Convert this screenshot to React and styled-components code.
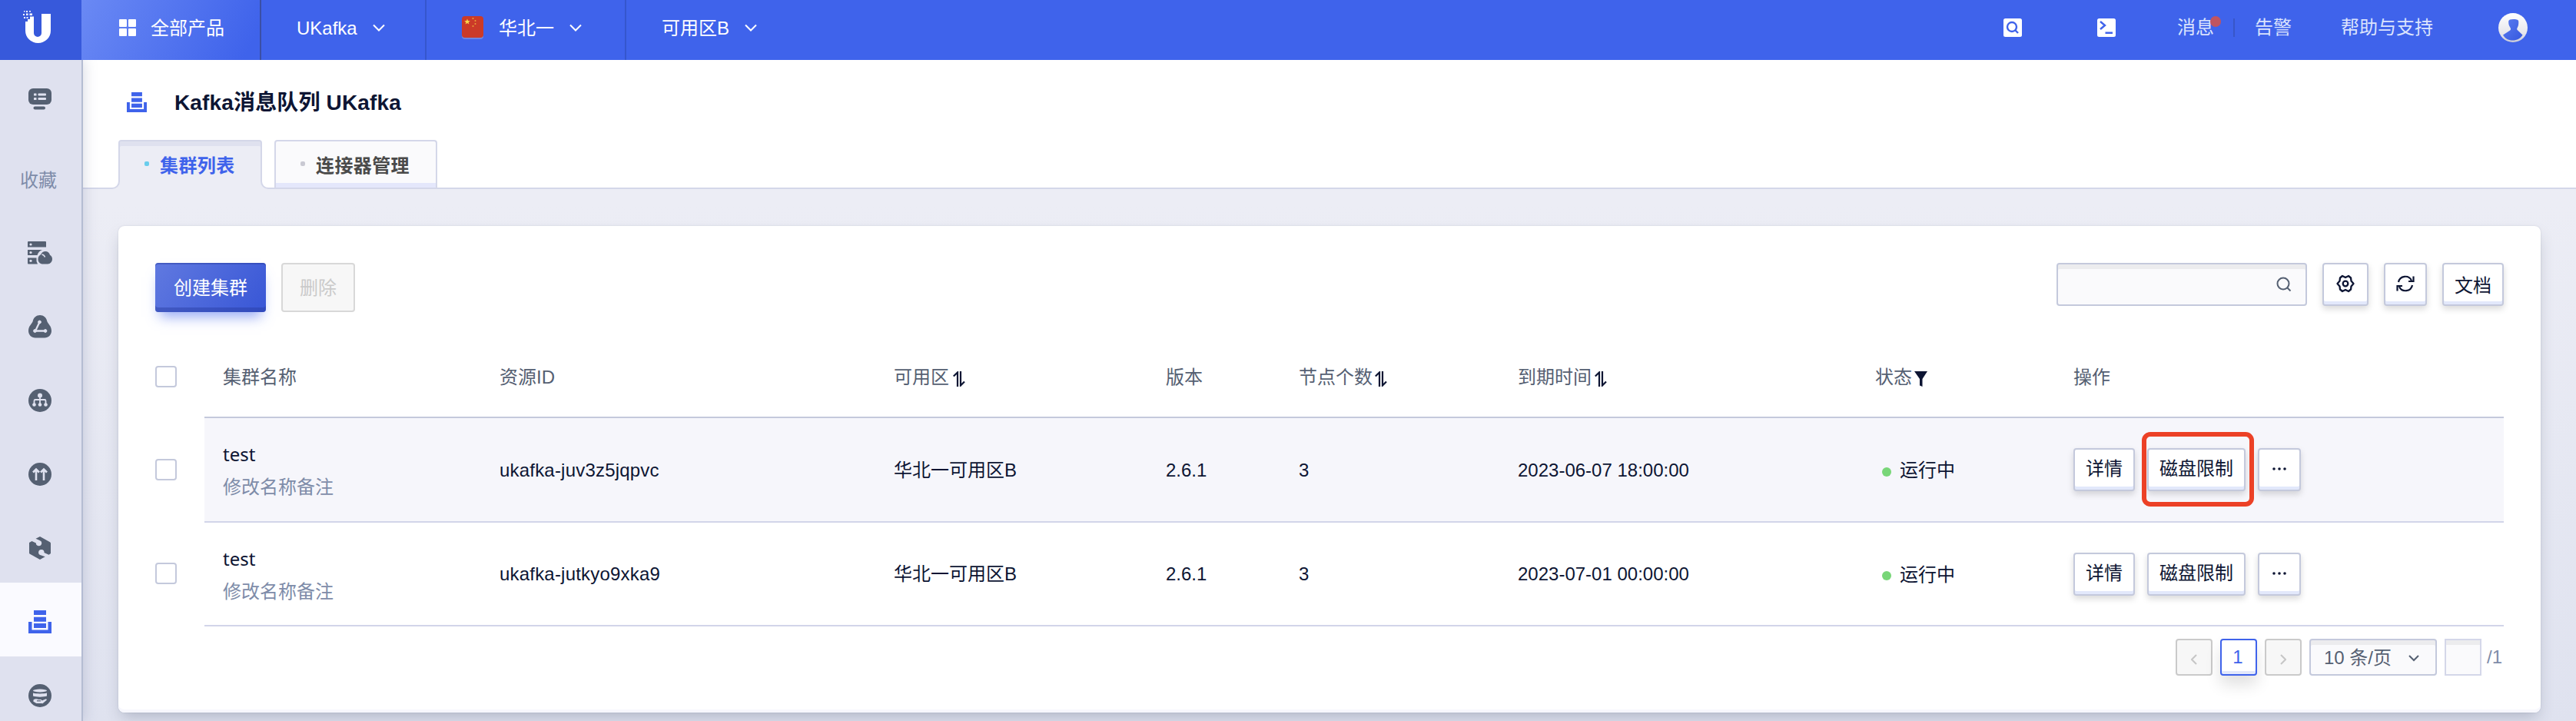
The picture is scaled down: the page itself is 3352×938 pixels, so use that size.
import React from 'react';
import styled, { createGlobalStyle, css } from 'styled-components';

const sans = '"Liberation Sans", "Noto Sans CJK SC", sans-serif';

const GlobalStyle = createGlobalStyle`
  *, *::before, *::after { box-sizing: border-box; }
  body { margin: 0; font-family: ${sans}; font-size: 24px; color: #0d1533; overflow: hidden; }
  button, input { font: inherit; color: inherit; }
  svg { display: block; flex: none; }
`;

const Page = styled.div`
  height: 938px;
  display: flex;
  flex-direction: column;
  overflow: hidden;
`;

/* ---------- top navigation ---------- */
const TopBar = styled.header`
  position: relative;
  z-index: 3;
  flex: none;
  height: 78px;
  display: flex;
  background: #3f63eb;
  color: #fff;
  line-height: 36px;
`;
const LogoBox = styled.div`
  width: 106px;
  padding: 14px 0 0 30px;
  background: #3759db;
`;
const NavItem = styled.div`
  width: ${(p) => p.$width}px;
  padding: 0 0 6px ${(p) => p.$pad}px;
  display: flex;
  align-items: center;
  border-right: ${(p) => (p.$last ? 'none' : '2px solid ' + (p.$primary ? '#3a4fa5' : '#3556cd'))};
  ${(p) => p.$primary && css`background: linear-gradient(117deg, #6a89f4 0%, #3f63eb 92%);`}
  > * + * { margin-left: ${(p) => p.$gap || 20}px; }
`;
const NavLabel = styled.span`padding-top: 2px;`;
const Spacer = styled.div`flex: 1;`;
const TopTools = styled.div`
  display: flex;
  align-items: center;
  padding: 0 63px 6px 0;
  color: #dbe3fd;
`;
const ToolSlot = styled.div`
  position: relative;
  margin-left: ${(p) => p.$ml}px;
`;
const AlertDot = styled.i`
  position: absolute;
  top: 3px;
  right: -9px;
  width: 14px;
  height: 14px;
  border-radius: 50%;
  background: #c1545f;
`;
const ToolDivider = styled.i`
  width: 2px;
  height: 24px;
  margin-left: 25px;
  background: #3856c8;
`;

/* ---------- body ---------- */
const Body = styled.div`
  flex: 1;
  min-height: 0;
  display: flex;
`;
const Sidebar = styled.nav`
  position: relative;
  z-index: 2;
  flex: none;
  width: 108px;
  background: #dfe1ef;
  border-right: 2px solid #b4bcd2;
  box-shadow: 2px 0 16px rgba(90, 100, 140, 0.22);
`;
const SideItem = styled.div`
  height: ${(p) => p.$height || 96}px;
  padding: ${(p) => (p.$top === undefined ? 6 : p.$top)}px 2px ${(p) => p.$bottom || 0}px 0;
  display: flex;
  align-items: center;
  justify-content: center;
  color: ${(p) => (p.$active ? '#3f63eb' : '#556072')};
  background: ${(p) => (p.$active ? '#fafaff' : 'transparent')};
`;
const SideLabel = styled.span`
  padding: 0 4px 1px 0;
  color: #7e8ca9;
`;
const Main = styled.main`
  flex: 1;
  min-width: 0;
  display: flex;
  flex-direction: column;
  background: linear-gradient(180deg, #ecedf5 0%, #ecedf5 22%, #dfe2ef 100%);
`;
const PageHead = styled.div`
  flex: none;
  height: 168px;
  padding: 0 0 0 46px;
  display: flex;
  flex-direction: column;
  background: #fff;
  border-bottom: 2px solid #d4d7e9;
`;
const TitleRow = styled.div`
  flex: none;
  height: 104px;
  padding: 7px 0 0 11px;
  display: flex;
  align-items: center;
  gap: 36px;
`;
const TitleIcon = styled.span`
  padding-bottom: 2px;
  color: #3f63eb;
`;
const Title = styled.h1`
  margin: 0;
  font-size: 28px;
  line-height: 40px;
  font-weight: 700;
  letter-spacing: 0.15px;
`;
const TabRow = styled.div`
  flex: none;
  margin-bottom: -2px;
  display: flex;
  gap: 16px;
`;
const Tab = styled.div`
  position: relative;
  height: ${(p) => (p.$active ? 64 : 62)}px;
  width: ${(p) => p.$width}px;
  padding: 0 0 ${(p) => (p.$active ? 4 : 2)}px 32px;
  display: flex;
  align-items: center;
  gap: 14px;
  font-weight: 700;
  letter-spacing: 0.4px;
  border: 2px solid #d4d7e9;
  border-bottom: none;
  border-radius: 4px 4px 0 0;
  color: ${(p) => (p.$active ? '#3f63eb' : '#4a4a4a')};
  background: ${(p) => (p.$active ? '#ecedf5' : '#fafafc')};
  box-shadow: ${(p) => (p.$active ? 'inset 0 6px 0 #dfe1ef' : 'inset 0 -6px 0 #e4e7fb')};
`;
/* concave foot where the active tab meets the baseline */
const TabFoot = styled.i`
  position: absolute;
  bottom: 0;
  ${(p) => (p.$side === 'left' ? 'left: -10px;' : 'right: -10px;')}
  width: 10px;
  height: 10px;
  overflow: hidden;
  background: #ecedf5;
  &::after {
    content: '';
    position: absolute;
    bottom: 0;
    ${(p) => (p.$side === 'left' ? 'right: 0;' : 'left: 0;')}
    width: 20px;
    height: 20px;
    border: 2px solid #d4d7e9;
    border-radius: 10px;
    background: #fff;
  }
`;
const TabDot = styled.i`
  width: 6px;
  height: 6px;
  border-radius: 2px;
  background: ${(p) => (p.$active ? '#69cdec' : '#c9c9d3')};
`;

/* ---------- card ---------- */
const Card = styled.section`
  flex: none;
  height: 633px;
  margin: 48px 46px 0;
  padding: 48px;
  background: #fff;
  border-radius: 8px;
  box-shadow: inset 0 -4px 0 #f7f7fd, 0 0 2px rgba(60, 70, 100, 0.18), 0 10px 20px -4px rgba(50, 60, 90, 0.26);
`;
const Toolbar = styled.div`
  height: 64px;
  display: flex;
  align-items: flex-start;
  gap: 20px;
`;
const PrimaryButton = styled.button`
  width: 144px;
  height: 64px;
  padding: 0 0 4px;
  border: none;
  border-radius: 4px;
  color: #fff;
  background: linear-gradient(125deg, #6079e0, #3856d6);
  box-shadow: inset 0 2px 0 rgba(40, 60, 160, 0.45), inset 0 -6px 0 rgba(40, 60, 160, 0.45),
    0 12px 16px -6px rgba(63, 99, 235, 0.55);
`;
const DisabledButton = styled.button`
  width: 96px;
  height: 64px;
  padding: 0 0 4px;
  border: 2px solid #d8d8d8;
  border-radius: 4px;
  color: #cacaca;
  background: #f7f7f7;
`;
const Button = styled.button`
  flex: none;
  width: ${(p) => p.$width}px;
  height: 56px;
  padding: 0 0 2px;
  display: flex;
  align-items: center;
  justify-content: center;
  white-space: nowrap;
  border: 2px solid #c4c9dc;
  border-radius: 4px;
  background: #fff;
  box-shadow: inset 0 -4px 0 #e2e8fb, 0 4px 8px rgba(0, 0, 0, 0.15);
`;
const SearchBox = styled.div`
  width: 326px;
  height: 56px;
  padding: 0 18px;
  display: flex;
  align-items: center;
  justify-content: flex-end;
  border: 2px solid #c4c9dc;
  border-radius: 4px;
  background: #fafafc;
  box-shadow: inset 0 6px 0 #ececee;
`;

/* ---------- table ---------- */
const Table = styled.div`margin-top: 32px;`;
const Row = styled.div`
  height: ${(p) => p.$height}px;
  display: flex;
`;
const CheckCell = styled.div`
  width: 64px;
  padding-bottom: 3px;
  display: flex;
  align-items: center;
`;
const Checkbox = styled.span`
  width: 28px;
  height: 28px;
  border: 2px solid #c4c9dc;
  border-radius: 4px;
  background: #fff;
`;
const Cells = styled.div`
  flex: 1;
  display: grid;
  grid-template-columns: 360px 513px 354px 173px 285px 465px 258px 1fr;
  align-items: center;
  border-bottom: 2px solid ${(p) => (p.$head ? '#c4c9dc' : '#d2d5e9')};
  background: ${(p) => (p.$shade ? '#f6f6fb' : 'transparent')};
  color: ${(p) => (p.$head ? '#556072' : '#0d1533')};
`;
const Cell = styled.div`
  padding: 1px 0 0 24px;
  display: flex;
  align-items: center;
  line-height: 36px;
  white-space: nowrap;
`;
const IdCell = styled(Cell)`letter-spacing: 0.2px;`;
const NameCell = styled(Cell)`
  flex-direction: column;
  align-items: flex-start;
  padding-top: 3px;
  gap: 1px;
  line-height: 42px;
`;
const Name = styled.span`font-family: "Noto Sans", sans-serif;`;
const SubName = styled.span`color: #7e8ca9;`;
const HeadIcon = styled.span`
  margin-left: ${(p) => p.$gap}px;
  padding-top: 5px;
  color: #0d1533;
`;
const Status = styled.span`
  display: flex;
  align-items: center;
  padding: 1px 0 0 9px;
  gap: 11px;
  &::before {
    content: '';
    width: 12px;
    height: 12px;
    margin-top: 3px;
    border-radius: 50%;
    background: #78d678;
  }
`;
const Actions = styled(Cell)`
  padding-top: 0;
  gap: 16px;
`;
const Highlight = styled.div`
  position: relative;
  &::after {
    content: '';
    position: absolute;
    top: -21px;
    bottom: -20px;
    left: -7px;
    right: -11px;
    border: 6px solid #ec4126;
    border-radius: 11px;
  }
`;

/* ---------- pagination ---------- */
const Pager = styled.div`
  margin-top: 16px;
  display: flex;
  justify-content: flex-end;
  gap: 10px;
  line-height: 44px;
`;
const PageButton = styled.button`
  width: 48px;
  height: 48px;
  padding: 5px 0 0;
  display: flex;
  align-items: center;
  justify-content: center;
  border: 2px solid #cacaca;
  border-radius: 4px;
  color: #c6c6c6;
  background: #f7f7f7;
  ${(p) => p.$current && css`
    padding: 0 2px 0 0;
    border-color: #3f63eb;
    color: #3f63eb;
    background: #fff;
    box-shadow: inset 0 -4px 0 #e2e8fb, 0 12px 20px rgba(0, 0, 0, 0.12);
  `}
`;
const PageSize = styled.div`
  width: 166px;
  height: 48px;
  padding: 2px 21px 0 17px;
  display: flex;
  align-items: center;
  justify-content: space-between;
  border: 2px solid #c4c9dc;
  border-radius: 4px;
  color: #556072;
  background: #fafafc;
  box-shadow: inset 0 6px 0 #ececee;
`;
const PageInput = styled.div`
  width: 48px;
  height: 48px;
  border: 2px solid #d4d7e9;
  background: #fafafc;
  box-shadow: inset 0 6px 0 #ececee;
`;
const PageTotal = styled.span`
  margin-left: -3px;
  padding-right: 2px;
  line-height: 48px;
  color: #7e8ca9;
`;

/* ---------- drawings ---------- */
const Logo = () => (
  <svg width="38" height="42" viewBox="0 0 38 42" fill="#fff">
    <path d="M3 14h3v-3h3V7.500h5V29a5 5 0 0 0 10 0V4h12v22a16.500 16 0 0 1-33 0z" />
    <path d="M1 0h1.500v1.500H1zM4 0h2v2H4zM8 0h2v1.500H8zM0 4h2v2H0zM4 3.500h2.500V6H4zM8.500 3.500h3.500V6H8.500zM1 8h2v2H1zM4.500 8h2v2h-2z" />
  </svg>
);
const GridIcon = () => (
  <svg width="22" height="22" viewBox="0 0 22 22" fill="#fff">
    <rect width="10" height="10" rx="1" /><rect x="12" width="10" height="10" rx="1" />
    <rect y="12" width="10" height="10" rx="1" /><rect x="12" y="12" width="10" height="10" rx="1" />
  </svg>
);
const Chevron = ({ w = 16, h = 10, d = 'M1 1.500l7 7 7-7' }) => (
  <svg width={w} height={h} viewBox={`0 0 ${w} ${h}`} fill="none" stroke="currentColor" strokeWidth="2"><path d={d} /></svg>
);
const Flag = () => (
  <svg width="28" height="30" viewBox="0 0 28 30">
    <rect y="2" width="28" height="28" rx="4" fill="#6f86e0" />
    <rect width="28" height="28" rx="4" fill="#cb3a28" />
    <path fill="#f7d74a" d="M7 3.500l1 2.600 2.800.1-2.200 1.700.8 2.700L7 9.100l-2.400 1.500.8-2.700-2.200-1.700 2.800-.1z" />
    <g fill="#e8a33a"><circle cx="14.500" cy="3" r="1" /><circle cx="17.500" cy="6" r="1" /><circle cx="17.500" cy="10" r="1" /><circle cx="14.500" cy="13" r="1" /></g>
  </svg>
);
const SearchTile = () => (
  <svg width="24" height="24" viewBox="0 0 24 24" fill="none" stroke="#3f63eb" strokeWidth="2.400">
    <rect width="24" height="24" rx="2.500" fill="#fff" stroke="none" />
    <circle cx="11" cy="11" r="6" /><path d="M15 15l4 4" />
  </svg>
);
const TerminalTile = () => (
  <svg width="24" height="24" viewBox="0 0 24 24" fill="none" stroke="#3f63eb" strokeWidth="2.400">
    <rect width="24" height="24" rx="2.500" fill="#fff" stroke="none" />
    <path d="M4 4l6 5-6 5M10.500 18.800h9.500" />
  </svg>
);
const Avatar = () => (
  <svg width="38" height="38" viewBox="0 0 38 38">
    <defs>
      <linearGradient id="ring" x1="0" y1="0" x2="0" y2="1"><stop offset="0" stopColor="#fff" /><stop offset=".7" stopColor="#e6e6ec" /><stop offset="1" stopColor="#c9cad6" /></linearGradient>
      <linearGradient id="bust" x1="0" y1="0" x2="1" y2="1"><stop offset="0" stopColor="#5b7cf0" /><stop offset="1" stopColor="#3558df" /></linearGradient>
    </defs>
    <circle cx="19" cy="19" r="19" fill="url(#ring)" />
    <path fill="url(#bust)" d="M13.200 10.500c.3-1.700 2.500-2.500 6-2.500s6.700.5 7 2.500c.3 3.500-.2 6.500-1.700 9-.7 1-.3 2.500 1 3.200L31.500 28.500C29 33 24 35.500 18.500 35.500S8.500 33 6 28.500l8.500-5.500c1.700-1 2-2.300 1-4-1.700-2.500-2.500-5-2.300-8.500z" />
  </svg>
);
const QueueIcon = ({ size = 30 }) => (
  <svg width={size} height={size} viewBox="0 0 30 30" fill="currentColor">
    <path d="M7 0h16v6H7zM7 8.700h16v6H7zM7 17h16v6H7zM0 15h4.500v10.500h21V15H30v15H0z" />
  </svg>
);
const ConsoleIcon = () => (
  <svg width="30" height="28" viewBox="0 0 30 28" fill="currentColor">
    <path d="M6 0h18a6 6 0 0 1 6 6v9a6 6 0 0 1-6 6H6a6 6 0 0 1-6-6V6a6 6 0 0 1 6-6z" />
    <rect x="6.500" y="23.500" width="15.500" height="4" rx="2" />
    <g fill="#dfe1ef"><rect x="7" y="6.500" width="3.500" height="3" rx=".5" /><rect x="12.500" y="6.500" width="10.500" height="3" rx="1" /><rect x="7" y="12" width="3.500" height="3" rx=".5" /><rect x="12.500" y="12" width="10.500" height="3" rx="1" /></g>
  </svg>
);
const ServerCloudIcon = () => (
  <svg width="32" height="30" viewBox="0 0 32 30" fill="currentColor">
    <path d="M1 0h22a1 1 0 0 1 1 1v6.500H0V1a1 1 0 0 1 1-1zM0 11h19c-3 1-5.500 3.500-6.500 7H0zM0 21.500h11.500V26l1.500 3.500H1a1 1 0 0 1-1-1z" />
    <path d="M20 29.500c-4 0-6.500-2.800-6.500-6.300 0-3 1.500-5 3.500-5.900 1.200-2.800 3.700-4.300 6-4.300 3 0 5.300 2 6 4.800 2 1.200 3 3.200 3 5.200 0 3.500-2.500 6.500-6 6.500z" />
    <path d="M18.500 17c2 .5 3.500 1.700 4 3.500" stroke="#dfe1ef" strokeWidth="1.600" fill="none" />
    <g fill="#dfe1ef"><circle cx="4" cy="4" r="1.600" /><circle cx="4" cy="14.500" r="1.600" /><circle cx="4" cy="25.300" r="1.600" /></g>
  </svg>
);
const NodesIcon = () => (
  <svg width="30" height="30" viewBox="0 0 30 30" fill="currentColor">
    <path d="M15 0c4.500 0 8.500 3 9.300 8C25.500 11.500 30 14 30 20.500c0 5-4 9-9 9H9c-5 0-9-4-9-9C0 14 4.500 11.500 5.700 8 6.500 3 10.500 0 15 0z" />
    <g fill="#dfe1ef" stroke="#dfe1ef"><path d="M14.500 9L9 20.500h13" fill="none" strokeWidth="2.300" /><circle cx="14.500" cy="9" r="1.900" /><circle cx="8.500" cy="20.500" r="1.900" /><circle cx="22" cy="20.500" r="1.900" /></g>
  </svg>
);
const TreeIcon = () => (
  <svg width="30" height="30" viewBox="0 0 30 30" fill="currentColor">
    <circle cx="15" cy="15" r="15" />
    <g fill="#dfe1ef"><circle cx="15" cy="8.500" r="3" /><circle cx="7.500" cy="20.500" r="2.300" /><circle cx="15" cy="20.500" r="2.300" /><circle cx="22.500" cy="20.500" r="2.300" /></g>
    <path d="M15 9v11M7.500 20v-4.500a1.500 1.500 0 0 1 1.500-1.500h12a1.500 1.500 0 0 1 1.500 1.500V20" fill="none" stroke="#dfe1ef" strokeWidth="1.800" />
  </svg>
);
const ArrowsIcon = () => (
  <svg width="30" height="30" viewBox="0 0 30 30" fill="currentColor">
    <circle cx="15" cy="15" r="15" />
    <path d="M10 23V9.500M6 12.500l4-4 4 4M20 23V9.500M16 12.500l4-4 4 4" fill="none" stroke="#dfe1ef" strokeWidth="2.600" />
  </svg>
);
const HexIcon = () => (
  <svg width="28" height="30" viewBox="0 0 28 30" fill="currentColor">
    <path d="M8.500 2.800L14 0l13 7.200a2 2 0 0 1 1 1.800v13l-2.500 1.700-6-2.700a3.700 3.700 0 1 0-3.800 3.400l5 1.800L14 30 1 22.800A2 2 0 0 1 0 21V8l3.500-2 5.300 2.500A3.700 3.700 0 1 0 13.500 5z" />
  </svg>
);
const DiskHandIcon = () => (
  <svg width="30" height="30" viewBox="0 0 30 30" fill="currentColor">
    <circle cx="15" cy="15" r="15" />
    <ellipse cx="15" cy="8.500" rx="9" ry="1.900" fill="#dfe1ef" />
    <path d="M6 11.500c4 1.200 14 1.200 18 0V15.500c-4 1.500-14 1.500-18 0zM6.500 20.500c2-1.700 4.500-1.700 6.500-.5h3.500l1 1.500 5.500-2.300 1 1.300-5.500 4.800c-3-.8-5.500 0-8-.3-1.500-.3-2.500-2-4-2z" fill="#dfe1ef" />
    <path d="M11 21.800h5" stroke="currentColor" strokeWidth="1.200" />
  </svg>
);
const SearchIcon = () => (
  <svg width="20" height="20" viewBox="0 0 20 20" fill="none" stroke="#556072" strokeWidth="2"><circle cx="9" cy="9" r="7.500" /><path d="M14.500 14.500l4 4" /></svg>
);
const GearIcon = () => (
  <svg width="24" height="24" viewBox="0 0 24 24" fill="none" stroke="currentColor" strokeWidth="2.300" strokeLinejoin="round">
    <path d="M8 2l4 2 4-2 3 2.500.5 4L22.500 12l-3 3.500-.5 4L16 22l-4-2-4 2-3-2.500-.5-4L1.500 12l3-3.500.5-4z" />
    <circle cx="12" cy="12" r="3.300" />
  </svg>
);
const RefreshIcon = () => (
  <svg width="24" height="22" viewBox="0 0 24 22" fill="none" stroke="currentColor" strokeWidth="2.200">
    <path d="M3 9a9 9 0 0 1 17-2M22.500 1.500V8H16M21 13a9 9 0 0 1-17 2M1.500 20.500V14H8" />
  </svg>
);
const SortIcon = () => (
  <svg width="16" height="20" viewBox="0 0 16 20" fill="none" stroke="currentColor" strokeWidth="2.200"><path d="M.8 6.500L6 1.500V20M10 0v18.500l5-5" /></svg>
);
const FilterIcon = () => (
  <svg width="17" height="20" viewBox="0 0 17 20" fill="currentColor"><path d="M0 0h17l-6.500 10v10L7 18.500V10z" /></svg>
);
const MoreIcon = () => (
  <svg width="18" height="4" viewBox="0 0 18 4" fill="currentColor"><circle cx="2" cy="2" r="1.800" /><circle cx="9" cy="2" r="1.800" /><circle cx="16" cy="2" r="1.800" /></svg>
);

const sideIcons = [ServerCloudIcon, NodesIcon, TreeIcon, ArrowsIcon, HexIcon];

const columns = [
  { label: '集群名称' },
  { label: '资源ID' },
  { label: '可用区', icon: SortIcon, gap: 5 },
  { label: '版本' },
  { label: '节点个数', icon: SortIcon, gap: 3 },
  { label: '到期时间', icon: SortIcon, gap: 4 },
  { label: '状态', icon: FilterIcon, gap: 3 },
  { label: '操作' },
];

const clusters = [
  { id: 'ukafka-juv3z5jqpvc', expires: '2023-06-07 18:00:00', marked: true, height: 136 },
  { id: 'ukafka-jutkyo9xka9', expires: '2023-07-01 00:00:00', marked: false, height: 135 },
];

function ClusterRow({ cluster }) {
  const limit = <Button $width={128}>磁盘限制</Button>;
  return (
    <Row $height={cluster.height}>
      <CheckCell><Checkbox /></CheckCell>
      <Cells $shade={cluster.marked}>
        <NameCell><Name>test</Name><SubName>修改名称备注</SubName></NameCell>
        <IdCell>{cluster.id}</IdCell>
        <Cell>华北一可用区B</Cell>
        <Cell>2.6.1</Cell>
        <Cell>3</Cell>
        <Cell>{cluster.expires}</Cell>
        <Cell><Status>运行中</Status></Cell>
        <Actions>
          <Button $width={80}>详情</Button>
          {cluster.marked ? <Highlight>{limit}</Highlight> : limit}
          <Button $width={56}><MoreIcon /></Button>
        </Actions>
      </Cells>
    </Row>
  );
}

export default function App() {
  return (
    <Page>
      <GlobalStyle />
      <TopBar>
        <LogoBox><Logo /></LogoBox>
        <NavItem $width={234} $pad={49} $gap={19} $primary><GridIcon /><NavLabel>全部产品</NavLabel></NavItem>
        <NavItem $width={215} $pad={46}><NavLabel>UKafka</NavLabel><Chevron /></NavItem>
        <NavItem $width={260} $pad={46}><Flag /><NavLabel>华北一</NavLabel><Chevron /></NavItem>
        <NavItem $width={220} $pad={46} $last><NavLabel>可用区B</NavLabel><Chevron /></NavItem>
        <Spacer />
        <TopTools>
          <ToolSlot $ml={0}><SearchTile /></ToolSlot>
          <ToolSlot $ml={98}><TerminalTile /></ToolSlot>
          <ToolSlot $ml={80}><NavLabel>消息</NavLabel><AlertDot /></ToolSlot>
          <ToolDivider />
          <ToolSlot $ml={26}>告警</ToolSlot>
          <ToolSlot $ml={64}>帮助与支持</ToolSlot>
          <ToolSlot $ml={85}><Avatar /></ToolSlot>
        </TopTools>
      </TopBar>
      <Body>
        <Sidebar>
          <SideItem $height={104} $top={0} $bottom={2}><ConsoleIcon /></SideItem>
          <SideItem><SideLabel>收藏</SideLabel></SideItem>
          {sideIcons.map((Icon, i) => <SideItem key={i}><Icon /></SideItem>)}
          <SideItem $active><QueueIcon /></SideItem>
          <SideItem><DiskHandIcon /></SideItem>
        </Sidebar>
        <Main>
          <PageHead>
            <TitleRow>
              <TitleIcon><QueueIcon size={26} /></TitleIcon>
              <Title>Kafka消息队列 UKafka</Title>
            </TitleRow>
            <TabRow>
              <Tab $active $width={187}>
                <TabFoot $side="left" /><TabFoot $side="right" />
                <TabDot $active />集群列表
              </Tab>
              <Tab $width={212}><TabDot />连接器管理</Tab>
            </TabRow>
          </PageHead>
          <Card>
            <Toolbar>
              <PrimaryButton>创建集群</PrimaryButton>
              <DisabledButton>删除</DisabledButton>
              <Spacer />
              <SearchBox><SearchIcon /></SearchBox>
              <Button $width={60}><GearIcon /></Button>
              <Button $width={56}><RefreshIcon /></Button>
              <Button $width={80}>文档</Button>
            </Toolbar>
            <Table>
              <Row $height={106}>
                <CheckCell><Checkbox /></CheckCell>
                <Cells $head>
                  {columns.map(({ label, icon: Icon, gap }) => (
                    <Cell key={label}>{label}{Icon && <HeadIcon $gap={gap}><Icon /></HeadIcon>}</Cell>
                  ))}
                </Cells>
              </Row>
              {clusters.map((c) => <ClusterRow key={c.id} cluster={c} />)}
            </Table>
            <Pager>
              <PageButton><Chevron w={8} h={14} d="M7 1L1 7l6 6" /></PageButton>
              <PageButton $current>1</PageButton>
              <PageButton><Chevron w={8} h={14} d="M1 1l6 6-6 6" /></PageButton>
              <PageSize>10 条/页<Chevron w={14} h={9} d="M1 1l6 6 6-6" /></PageSize>
              <PageInput />
              <PageTotal>/1</PageTotal>
            </Pager>
          </Card>
        </Main>
      </Body>
    </Page>
  );
}
